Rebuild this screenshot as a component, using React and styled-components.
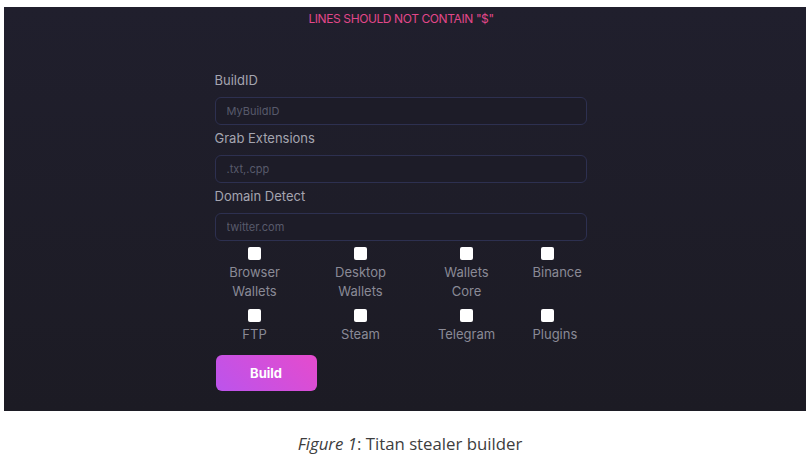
import React from "react"
import styled, { createGlobalStyle } from "styled-components"

const GlobalStyle = createGlobalStyle`
  html, body {
    margin: 0;
    padding: 0;
    background: #ffffff;
  }
`

const Page = styled.div`
  width: 812px;
  height: 469px;
  padding: 7px 6px 0 4px;
  box-sizing: border-box;
  display: flex;
  flex-direction: column;
`

const Panel = styled.div`
  height: 404px;
  background: linear-gradient(180deg, #201f2d 0%, #1c1b24 100%);
  display: flex;
  flex-direction: column;
  align-items: center;
`

const Warning = styled.div`
  margin-top: 5px;
  margin-right: 8px;
  font-family: Inter, "Liberation Sans", sans-serif;
  font-size: 12px;
  line-height: 14px;
  letter-spacing: -0.4px;
  color: #e2478a;
`

const Form = styled.div`
  width: 372px;
  margin-top: 44px;
  margin-left: -9px;
  display: flex;
  flex-direction: column;
`

const Field = styled.div`
  display: flex;
  flex-direction: column;
`

const Label = styled.div`
  font-family: Inter, "Liberation Sans", sans-serif;
  font-size: 13px;
  line-height: 20px;
  color: #a5a5b0;
  margin-top: ${p => (p.$first ? 0 : 3)}px;
  margin-bottom: 7px;
`

const Input = styled.input`
  height: 28px;
  box-sizing: border-box;
  border: 1px solid #2d3050;
  border-radius: 6px;
  background: #1d1c28;
  padding: 0 11px;
  font-family: Inter, "Liberation Sans", sans-serif;
  font-size: 11px;
  color: #c0c0cc;
  outline: none;
  &::placeholder {
    color: #585a6b;
  }
`

const Options = styled.div`
  display: grid;
  grid-template-columns: 80px 80px 80px 1fr;
  column-gap: 26px;
  row-gap: 8px;
  margin-top: 6px;
`

const Option = styled.label`
  display: flex;
  flex-direction: column;
  align-items: ${p => (p.$left ? "flex-start" : "center")};
  gap: 3px;
`

const Box = styled.span`
  width: 13px;
  height: 13px;
  border-radius: 2px;
  background: #ffffff;
  margin-left: ${p => (p.$left ? 8 : 0)}px;
`

const OptionText = styled.span`
  font-family: Inter, "Liberation Sans", sans-serif;
  font-size: 13px;
  line-height: 19px;
  color: #8a8a96;
  text-align: center;
  white-space: pre-line;
`

const Button = styled.button`
  margin-top: 11px;
  margin-left: 1px;
  width: 101px;
  height: 36px;
  border: 0;
  border-radius: 6px;
  background: linear-gradient(45deg, #bb54ec 0%, #e54bcd 100%);
  color: #ffffff;
  font-family: Inter, "Liberation Sans", sans-serif;
  font-weight: 700;
  font-size: 13px;
`

const Caption = styled.div`
  margin-top: 22px;
  text-align: center;
  padding-left: 10px;
  font-family: "Open Sans", sans-serif;
  font-size: 16.8px;
  line-height: 22px;
  color: #3d3d3d;
  em {
    font-style: italic;
  }
`

const fields = [
  { label: "BuildID", placeholder: "MyBuildID" },
  { label: "Grab Extensions", placeholder: ".txt,.cpp" },
  { label: "Domain Detect", placeholder: "twitter.com" },
]

const options = [
  "Browser\nWallets",
  "Desktop\nWallets",
  "Wallets\nCore",
  "Binance",
  "FTP",
  "Steam",
  "Telegram",
  "Plugins",
]

export default function App() {
  return (
    <>
      <GlobalStyle />
      <Page>
        <Panel>
          <Warning>LINES SHOULD NOT CONTAIN "$"</Warning>
          <Form>
            {fields.map((f, i) => (
              <Field key={f.label}>
                <Label $first={i === 0}>{f.label}</Label>
                <Input placeholder={f.placeholder} />
              </Field>
            ))}
            <Options>
              {options.map((o, i) => (
                <Option key={o} $left={i % 4 === 3}>
                  <Box $left={i % 4 === 3} />
                  <OptionText>{o}</OptionText>
                </Option>
              ))}
            </Options>
            <div>
              <Button>Build</Button>
            </div>
          </Form>
        </Panel>
        <Caption>
          <em>Figure 1</em>: Titan stealer builder
        </Caption>
      </Page>
    </>
  )
}
